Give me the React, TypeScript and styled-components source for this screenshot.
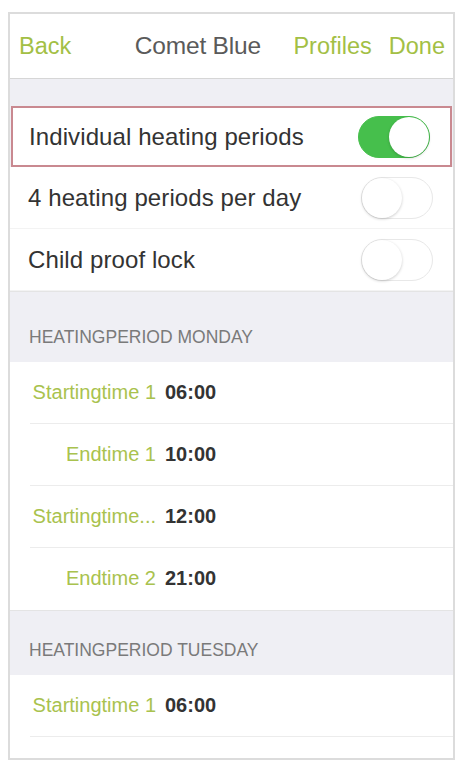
import { FC } from 'react';
import styled, { createGlobalStyle } from 'styled-components';

const GlobalStyle = createGlobalStyle`
  html, body {
    margin: 0;
    padding: 0;
    background: #ffffff;
    font-family: "Liberation Sans", Arial, sans-serif;
  }
`;

const Page = styled.div`
  padding: 12px 5px 5px 8px;
`;

const Phone = styled.div`
  border: 2px solid #dcdcdc;
  height: 744px;
  overflow: hidden;
  background: #efeff4;
  display: flex;
  flex-direction: column;
`;

const NavBar = styled.div`
  height: 64px;
  flex-shrink: 0;
  background: #ffffff;
  border-bottom: 1px solid #d6d6d6;
  display: flex;
  align-items: center;
  padding: 0 8px 0 9px;
  font-size: 23.5px;
`;

const NavButton = styled.span`
  color: #a3bf45;
`;

const NavTitle = styled.span`
  flex: 1;
  text-align: center;
  color: #5a5a5a;
  font-size: 24.5px;
  letter-spacing: -0.2px;
  padding-left: 31px;
`;

const NavRight = styled.div`
  display: flex;
  gap: 17px;
`;

const Spacer = styled.div<{ h: number }>`
  height: ${({ h }) => h}px;
  flex-shrink: 0;
`;

const SettingRow = styled.div<{ highlight?: boolean }>`
  height: ${({ highlight }) => (highlight ? 57 : 61)}px;
  flex-shrink: 0;
  background: #ffffff;
  display: flex;
  align-items: center;
  justify-content: space-between;
  padding: 0 20px 0 ${({ highlight }) => (highlight ? 16 : 18)}px;
  border: ${({ highlight }) => (highlight ? '2px solid #c98990' : 'none')};
  margin: ${({ highlight }) => (highlight ? '0 1px' : '0')};
  border-bottom: ${({ highlight }) => (highlight ? '2px solid #c98990' : '1px solid #f3f3f3')};
`;

const SettingLabel = styled.span`
  font-size: 24px;
  color: #333333;
  letter-spacing: 0.1px;
`;

const Toggle = styled.div<{ on?: boolean }>`
  width: 70px;
  height: 40px;
  border-radius: 21px;
  flex-shrink: 0;
  position: relative;
  background: ${({ on }) => (on ? '#46bf4c' : '#ffffff')};
  border: 1px solid ${({ on }) => (on ? '#46bf4c' : '#e8e8e8')};

  &::after {
    content: '';
    position: absolute;
    top: 0px;
    left: ${({ on }) => (on ? '30px' : '0px')};
    width: 40px;
    height: 40px;
    border-radius: 50%;
    background: #ffffff;
    box-shadow: 0 1px 3px rgba(0, 0, 0, 0.2);
  }
`;

const SectionHeader = styled.div<{ h: number }>`
  height: ${({ h }) => h}px;
  flex-shrink: 0;
  display: flex;
  align-items: flex-end;
  padding: 0 0 14px 19px;
  box-sizing: border-box;
  font-size: 17.5px;
  color: #7a7a7a;
  text-transform: uppercase;
  border-top: 1px solid #e4e4e4;
`;

const TimeList = styled.div`
  background: #ffffff;
  flex-shrink: 0;
`;

const TimeRow = styled.div<{ last?: boolean }>`
  height: 61px;
  display: flex;
  align-items: center;
  margin-left: 20px;
  border-bottom: 1px solid ${({ last }) => (last ? 'transparent' : '#ececec')};
`;

const TimeLabel = styled.span`
  width: 126px;
  text-align: right;
  white-space: nowrap;
  overflow: hidden;
  font-size: 20px;
  color: #a9c24e;
`;

const TimeValue = styled.span`
  margin-left: 9px;
  font-size: 20px;
  font-weight: bold;
  color: #333333;
`;

interface Period {
  label: string;
  time: string;
}

const monday: Period[] = [
  { label: 'Startingtime 1', time: '06:00' },
  { label: 'Endtime 1', time: '10:00' },
  { label: 'Startingtime...', time: '12:00' },
  { label: 'Endtime 2', time: '21:00' },
];

const tuesday: Period[] = [
  { label: 'Startingtime 1', time: '06:00' },
  { label: '', time: '' },
];

const App: FC = () => {
  return (
    <Page>
      <GlobalStyle />
      <Phone>
        <NavBar>
          <NavButton>Back</NavButton>
          <NavTitle>Comet Blue</NavTitle>
          <NavRight>
            <NavButton>Profiles</NavButton>
            <NavButton>Done</NavButton>
          </NavRight>
        </NavBar>
        <Spacer h={27} />
        <SettingRow highlight>
          <SettingLabel>Individual heating periods</SettingLabel>
          <Toggle on />
        </SettingRow>
        <SettingRow>
          <SettingLabel>4 heating periods per day</SettingLabel>
          <Toggle />
        </SettingRow>
        <SettingRow>
          <SettingLabel>Child proof lock</SettingLabel>
          <Toggle />
        </SettingRow>
        <SectionHeader h={71}>Heatingperiod Monday</SectionHeader>
        <TimeList>
          {monday.map((p, i) => (
            <TimeRow key={i} last={i === monday.length - 1}>
              <TimeLabel>{p.label}</TimeLabel>
              <TimeValue>{p.time}</TimeValue>
            </TimeRow>
          ))}
        </TimeList>
        <SectionHeader h={65}>Heatingperiod Tuesday</SectionHeader>
        <TimeList>
          {tuesday.map((p, i) => (
            <TimeRow key={i} last={i === tuesday.length - 1}>
              <TimeLabel>{p.label}</TimeLabel>
              <TimeValue>{p.time}</TimeValue>
            </TimeRow>
          ))}
        </TimeList>
      </Phone>
    </Page>
  );
};

export default App;
